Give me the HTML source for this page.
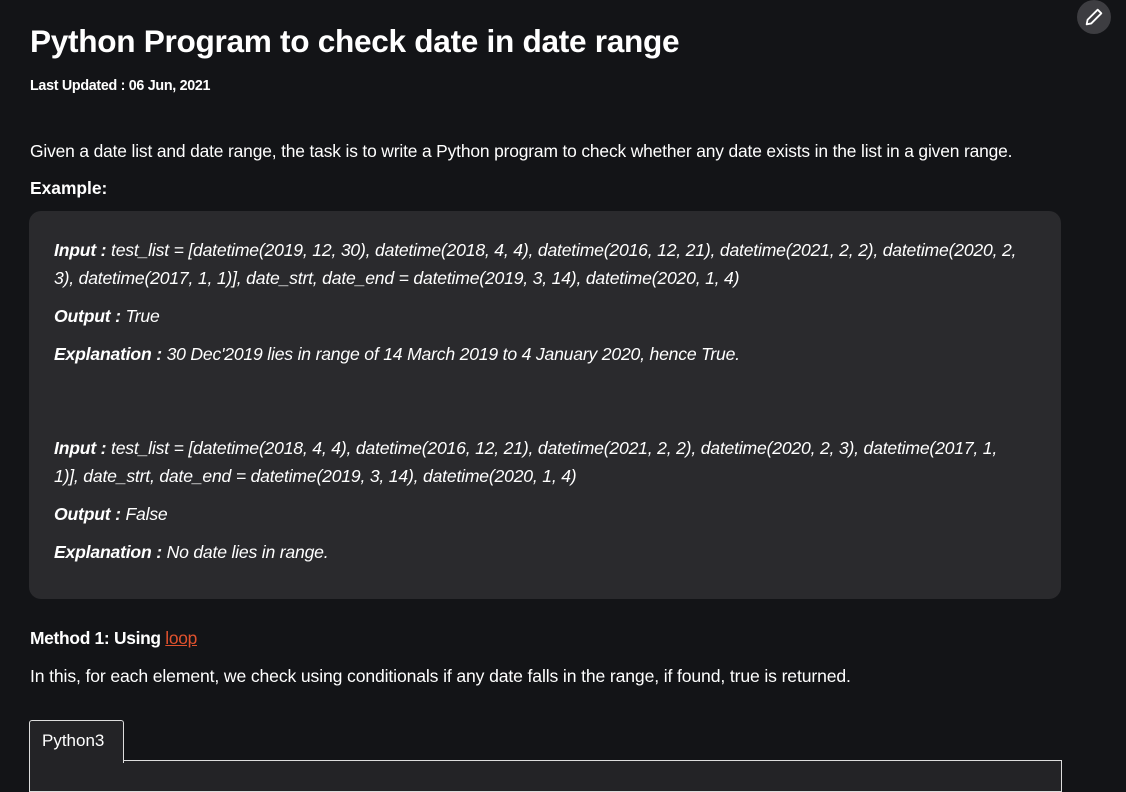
<!DOCTYPE html>
<html><head><meta charset="utf-8"><style>
body{margin:0;background:#131417;color:#fff;font-family:"Liberation Sans",sans-serif;width:1126px;height:780px;overflow:hidden;position:relative}
.a{position:absolute;white-space:nowrap}
h1{position:absolute;left:30px;top:23px;margin:0;font-size:31.6px;font-weight:bold;letter-spacing:-0.3px}
.box{position:absolute;left:29px;top:211px;width:1032px;height:388px;background:#2a2a2d;border-radius:12px}
.it{font-style:italic;font-size:17.6px;letter-spacing:-0.2px}
.it b{font-weight:bold}
</style></head><body>
<h1>Python Program to check date in date range</h1>
<div class="a" style="left:30px;top:78px;font-size:14.3px;font-weight:bold;letter-spacing:-0.3px">Last Updated : 06 Jun, 2021</div>
<div class="a" style="left:30px;top:141px;font-size:17.4px;letter-spacing:-0.15px">Given a date list and date range, the task is to write a Python program to check whether any date exists in the list in a given range.</div>
<div class="a" style="left:30px;top:178px;font-size:17.4px;font-weight:bold">Example:</div>
<div class="box"></div>
<div class="a it" style="left:54px;top:240px"><b>Input : </b>test_list = [datetime(2019, 12, 30), datetime(2018, 4, 4), datetime(2016, 12, 21), datetime(2021, 2, 2), datetime(2020, 2,</div>
<div class="a it" style="left:54px;top:268px">3), datetime(2017, 1, 1)], date_strt, date_end = datetime(2019, 3, 14), datetime(2020, 1, 4)</div>
<div class="a it" style="left:54px;top:306px"><b>Output : </b>True</div>
<div class="a it" style="left:54px;top:344px"><b>Explanation : </b>30 Dec'2019 lies in range of 14 March 2019 to 4 January 2020, hence True.</div>
<div class="a it" style="left:54px;top:438px"><b>Input : </b>test_list = [datetime(2018, 4, 4), datetime(2016, 12, 21), datetime(2021, 2, 2), datetime(2020, 2, 3), datetime(2017, 1,</div>
<div class="a it" style="left:54px;top:466px">1)], date_strt, date_end = datetime(2019, 3, 14), datetime(2020, 1, 4)</div>
<div class="a it" style="left:54px;top:504px"><b>Output : </b>False</div>
<div class="a it" style="left:54px;top:542px"><b>Explanation : </b>No date lies in range.</div>
<div class="a" style="left:30px;top:628px;font-size:17.4px;font-weight:bold;letter-spacing:-0.3px">Method 1: Using <span style="color:#e0522e;text-decoration:underline;font-weight:normal">loop</span></div>
<div class="a" style="left:30px;top:666px;font-size:17.6px;letter-spacing:-0.135px">In this, for each element, we check using conditionals if any date falls in the range, if found, true is returned.</div>
<div style="position:absolute;left:29px;top:760px;width:1031px;height:30px;border:1px solid #ddd;background:#232326"></div>
<div style="position:absolute;left:29px;top:720px;width:93px;height:42px;border:1px solid #ddd;border-bottom:none;border-radius:3px 3px 0 0;background:#232326"></div>
<div class="a" style="left:42px;top:731px;font-size:17px">Python3</div>
<div style="position:absolute;left:1077px;top:0;width:34px;height:34px;border-radius:50%;background:#3d3d41"></div>
<svg style="position:absolute;left:1083px;top:6px" width="22" height="22" viewBox="0 0 24 24" fill="none" stroke="#fff" stroke-width="2" stroke-linejoin="round"><path d="M16 4l4 4L9 19l-5 1 1-5z"/></svg>
</body></html>
